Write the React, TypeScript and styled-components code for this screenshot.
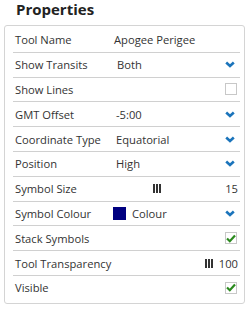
import React from 'react';
import styled, { createGlobalStyle } from 'styled-components';

const GlobalStyle = createGlobalStyle`
  body {
    margin: 0;
    background: #fff;
    font-family: "Open Sans", "Liberation Sans", sans-serif;
    color: #333;
  }
`;

const Page = styled.div`
  width: 251px;
  height: 309px;
`;

const Title = styled.h2`
  margin: 0;
  padding: 0 0 0 16px;
  font-size: 15px;
  font-weight: 700;
  line-height: 18px;
  color: #222;
`;

const Panel = styled.div`
  margin: 7px 6px 0 4px;
  border: 1px solid #d4d4d4;
  border-radius: 3px;
  padding: 2px 4px 3px 8px;
`;

const Row = styled.div`
  display: flex;
  align-items: center;
  height: 23.8px;
  padding: 0 2px;
  font-size: 11.2px;
  white-space: nowrap;
  border-bottom: 1px solid #d0d0d0;
  &:last-child {
    border-bottom: none;
  }
`;

const Label = styled.div`
  width: 99px;
  flex-shrink: 0;
`;

const Value = styled.div<{ $indent?: number }>`
  flex: 1;
  display: flex;
  align-items: center;
  padding-left: ${(p) => p.$indent ?? 0}px;
`;

const Right = styled.div`
  margin-left: auto;
  display: flex;
  align-items: center;
`;

const Swatch = styled.span<{ $color: string }>`
  width: 13px;
  height: 13px;
  background: ${(p) => p.$color};
  margin-right: 6px;
  margin-left: -1px;
`;

const Box = styled.span`
  width: 12px;
  height: 12px;
  border: 1px solid #c8c8c8;
  box-sizing: border-box;
  display: inline-flex;
  align-items: center;
  justify-content: center;
  margin-right: 1px;
`;

const Grip = styled.span`
  display: inline-flex;
  gap: 1px;
  & > i {
    width: 2px;
    height: 9px;
    background: #333;
  }
`;

const Number = styled.span<{ $gap?: number }>`
  margin-left: ${(p) => p.$gap ?? 0}px;
  text-align: right;
`;

const Chevron = () => (
  <svg width="10" height="7" viewBox="0 0 10 7" style={{ marginRight: 3 }}>
    <path d="M1.2 1.5 L5 5 L8.8 1.5" stroke="#1b74bb" strokeWidth="2.6" fill="none" />
  </svg>
);

const Check = () => (
  <svg width="10" height="9" viewBox="0 0 10 9">
    <path d="M1 4.5 L3.8 7.2 L9 1.5" stroke="#2b8a1e" strokeWidth="2.2" fill="none" />
  </svg>
);

const GripIcon = () => (
  <Grip>
    <i />
    <i />
    <i />
  </Grip>
);

const App = () => (
  <Page>
    <GlobalStyle />
    <Title>Properties</Title>
    <Panel>
      <Row>
        <Label>Tool Name</Label>
        <Value>Apogee Perigee</Value>
      </Row>
      <Row>
        <Label>Show Transits</Label>
        <Value $indent={3}>
          Both
          <Right><Chevron /></Right>
        </Value>
      </Row>
      <Row>
        <Label>Show Lines</Label>
        <Value>
          <Right><Box /></Right>
        </Value>
      </Row>
      <Row>
        <Label>GMT Offset</Label>
        <Value $indent={2}>
          -5:00
          <Right><Chevron /></Right>
        </Value>
      </Row>
      <Row>
        <Label>Coordinate Type</Label>
        <Value $indent={2}>
          Equatorial
          <Right><Chevron /></Right>
        </Value>
      </Row>
      <Row>
        <Label>Position</Label>
        <Value $indent={2}>
          High
          <Right><Chevron /></Right>
        </Value>
      </Row>
      <Row>
        <Label>Symbol Size</Label>
        <Value $indent={39}>
          <GripIcon />
          <Right><Number>15</Number></Right>
        </Value>
      </Row>
      <Row>
        <Label>Symbol Colour</Label>
        <Value>
          <Swatch $color="#000080" />
          Colour
          <Right><Chevron /></Right>
        </Value>
      </Row>
      <Row>
        <Label>Stack Symbols</Label>
        <Value>
          <Right><Box><Check /></Box></Right>
        </Value>
      </Row>
      <Row>
        <Label>Tool Transparency</Label>
        <Value>
          <Right>
            <GripIcon />
            <Number $gap={6}>100</Number>
          </Right>
        </Value>
      </Row>
      <Row>
        <Label>Visible</Label>
        <Value>
          <Right><Box><Check /></Box></Right>
        </Value>
      </Row>
    </Panel>
  </Page>
);

export default App;
